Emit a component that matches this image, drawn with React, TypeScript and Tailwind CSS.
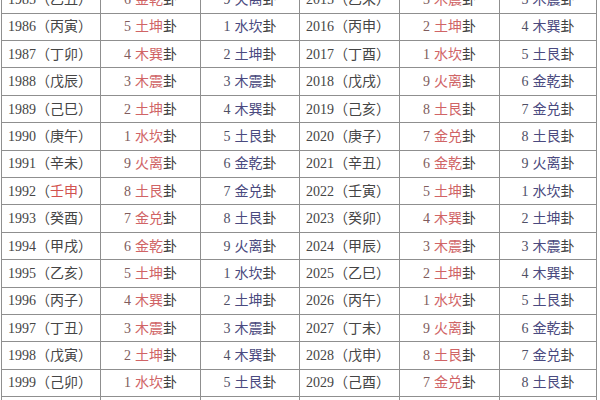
import React from "react";

const data: { y1: string; g1: string; a: string; b: string; y2: string; g2: string; c: string; d: string }[] = [
  { y1: "1985", g1: "乙丑", a: "6金乾", b: "9火离", y2: "2015", g2: "乙未", c: "3木震", d: "3木震" },
  { y1: "1986", g1: "丙寅", a: "5土坤", b: "1水坎", y2: "2016", g2: "丙申", c: "2土坤", d: "4木巽" },
  { y1: "1987", g1: "丁卯", a: "4木巽", b: "2土坤", y2: "2017", g2: "丁酉", c: "1水坎", d: "5土艮" },
  { y1: "1988", g1: "戊辰", a: "3木震", b: "3木震", y2: "2018", g2: "戊戌", c: "9火离", d: "6金乾" },
  { y1: "1989", g1: "己巳", a: "2土坤", b: "4木巽", y2: "2019", g2: "己亥", c: "8土艮", d: "7金兑" },
  { y1: "1990", g1: "庚午", a: "1水坎", b: "5土艮", y2: "2020", g2: "庚子", c: "7金兑", d: "8土艮" },
  { y1: "1991", g1: "辛未", a: "9火离", b: "6金乾", y2: "2021", g2: "辛丑", c: "6金乾", d: "9火离" },
  { y1: "1992", g1: "壬申", a: "8土艮", b: "7金兑", y2: "2022", g2: "壬寅", c: "5土坤", d: "1水坎" },
  { y1: "1993", g1: "癸酉", a: "7金兑", b: "8土艮", y2: "2023", g2: "癸卯", c: "4木巽", d: "2土坤" },
  { y1: "1994", g1: "甲戌", a: "6金乾", b: "9火离", y2: "2024", g2: "甲辰", c: "3木震", d: "3木震" },
  { y1: "1995", g1: "乙亥", a: "5土坤", b: "1水坎", y2: "2025", g2: "乙巳", c: "2土坤", d: "4木巽" },
  { y1: "1996", g1: "丙子", a: "4木巽", b: "2土坤", y2: "2026", g2: "丙午", c: "1水坎", d: "5土艮" },
  { y1: "1997", g1: "丁丑", a: "3木震", b: "3木震", y2: "2027", g2: "丁未", c: "9火离", d: "6金乾" },
  { y1: "1998", g1: "戊寅", a: "2土坤", b: "4木巽", y2: "2028", g2: "戊申", c: "8土艮", d: "7金兑" },
  { y1: "1999", g1: "己卯", a: "1水坎", b: "5土艮", y2: "2029", g2: "己酉", c: "7金兑", d: "8土艮" },
  { y1: "2000", g1: "庚辰", a: "9火离", b: "6金乾", y2: "2030", g2: "庚戌", c: "6金乾", d: "9火离" },
];

const font = { fontFamily: '"Liberation Serif", "Noto Sans CJK SC", serif' };

function YearCell({ y, g, red }: { y: string; g: string; red?: boolean }) {
  return (
    <div className="flex h-[27.4px] items-center border-b border-r border-[#8f8f8f] pl-[6px] text-[14px] text-[#454545]">
      <span>{y}</span>
      <span>（</span>
      <span className={red ? "text-[#d2524f]" : ""}>{g}</span>
      <span>）</span>
    </div>
  );
}

function GuaCell({ v, kind }: { v: string; kind: "m" | "f" }) {
  const num = v.slice(0, 1);
  const name = v.slice(1);
  return (
    <div className="flex h-[27.4px] items-center justify-center border-b border-r border-[#8f8f8f] text-[14px]">
      <span className={kind === "m" ? "text-[#805c5c]" : "text-[#4f4f66]"}>{num}</span>
      <span className="w-[4px]" />
      <span className={kind === "m" ? "text-[#d06466]" : "text-[#4a4a80]"}>{name}</span>
      <span className="text-[#404040]">卦</span>
    </div>
  );
}

export default function App() {
  return (
    <div className="h-[400px] w-[600px] overflow-hidden bg-white" style={font}>
      <div className="ml-px mt-[-14.7px] grid w-[596px] grid-cols-[99px_100px_99px_100px_100px_97px] border-l border-t border-[#8f8f8f]">
        {data.map((r) => (
          <React.Fragment key={r.y1}>
            <YearCell y={r.y1} g={r.g1} red={r.y1 === "1992"} />
            <GuaCell v={r.a} kind="m" />
            <GuaCell v={r.b} kind="f" />
            <YearCell y={r.y2} g={r.g2} />
            <GuaCell v={r.c} kind="m" />
            <GuaCell v={r.d} kind="f" />
          </React.Fragment>
        ))}
      </div>
    </div>
  );
}
